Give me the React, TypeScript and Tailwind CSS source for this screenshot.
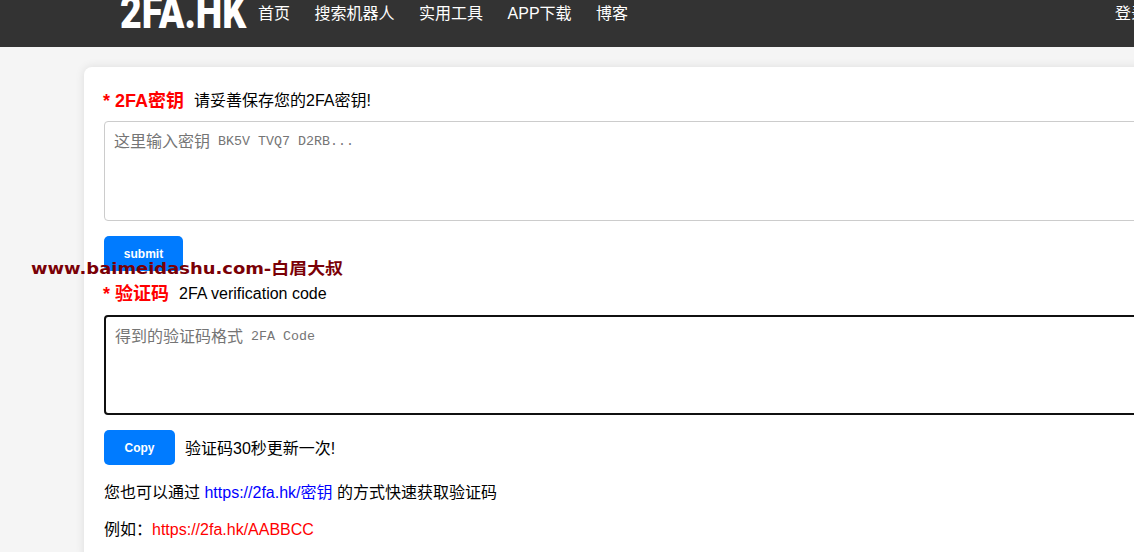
const cjk = "font-['Liberation_Sans','Noto_Sans_CJK_SC',sans-serif]"

function CodeBox({ hint, latin, className, hintPos }: { hint: string; latin: string; className: string; hintPos: string }) {
  return (
    <div className="relative">
      <textarea aria-label={hint} className={`block h-[100px] w-full resize-none bg-white outline-none ${className}`} />
      {/* placeholder mixes 16px CJK with half-width mono latin */}
      <div className={`pointer-events-none absolute flex items-center gap-2 text-[#757575] ${hintPos}`}>
        <span className="text-base leading-[21px]">{hint}</span>
        <span className="font-['Liberation_Mono',monospace] text-[13.33px] leading-[21px]">{latin}</span>
      </div>
    </div>
  )
}

export default function App() {
  return (
    <div className={`relative h-[552px] w-[1134px] overflow-hidden bg-[#f5f5f5] text-base text-black ${cjk}`}>
      <header className="flex h-[47px] w-[1147px] items-start bg-[#333333] pl-[120px] text-white">
        <span className="-mt-[14px] mr-[11px] w-[127px] origin-left scale-x-[0.8] font-['Roboto',sans-serif] text-[47px] font-black leading-[52px] whitespace-nowrap">
          2FA.HK
        </span>
        <nav className="flex gap-[24.5px] pt-[3px] leading-[22px]">
          <a>首页</a>
          <a>搜索机器人</a>
          <a>实用工具</a>
          <a>APP下载</a>
          <a>博客</a>
        </nav>
        <a className="ml-auto pt-[3px] leading-[22px]">登录</a>
      </header>

      <main className="ml-[84px] mt-5 w-[1100px] rounded-lg bg-white px-5 pb-5 pt-[22px] shadow-[0_0_10px_rgba(0,0,0,0.1)]">
        <div className="mb-2 flex h-[24px] items-center">
          <b className="-ml-px text-lg text-[#ff0000]">* 2FA密钥</b>
          <span className="ml-[10px]">请妥善保存您的2FA密钥!</span>
        </div>
        <CodeBox
          hint="这里输入密钥"
          latin="BK5V TVQ7 D2RB..."
          className="rounded border border-[#cccccc]"
          hintPos="left-[10px] top-[10px]"
        />
        <button className="mt-[15px] block h-[35px] w-[79px] rounded-[5px] bg-[#007bff] text-xs font-bold text-white">
          submit
        </button>
        <div className="mb-[9px] mt-[11px] flex h-[24px] items-center">
          <b className="-ml-px text-lg text-[#ff0000]">* 验证码</b>
          <span className="ml-[10px]">2FA verification code</span>
        </div>
        <CodeBox
          hint="得到的验证码格式"
          latin="2FA Code"
          className="rounded border-2 border-[#101010]"
          hintPos="left-[11px] top-[11px]"
        />
        <div className="mt-[15px] flex items-center">
          <button className="h-[35px] w-[71px] rounded-[5px] bg-[#007bff] text-xs font-bold text-white">Copy</button>
          <span className="ml-[10px] pt-[2px]">验证码30秒更新一次!</span>
        </div>
        <p className="mt-[17px] leading-[22px]">
          您也可以通过 <a className="text-[#0000ff]">https://2fa.hk/密钥</a> 的方式快速获取验证码
        </p>
        <p className="mt-[15px] leading-[22px]">
          例如：<a className="text-[#ff0000]">https://2fa.hk/AABBCC</a>
        </p>
      </main>

      {/* watermark stamped over the page */}
      <div className="absolute left-[31px] top-[257px] origin-left scale-x-[1.12] font-['DejaVu_Sans','Noto_Sans_CJK_SC',sans-serif] text-base font-bold leading-[24px] whitespace-nowrap text-[#7a0006]">
        www.baimeidashu.com-白眉大叔
      </div>
    </div>
  )
}
